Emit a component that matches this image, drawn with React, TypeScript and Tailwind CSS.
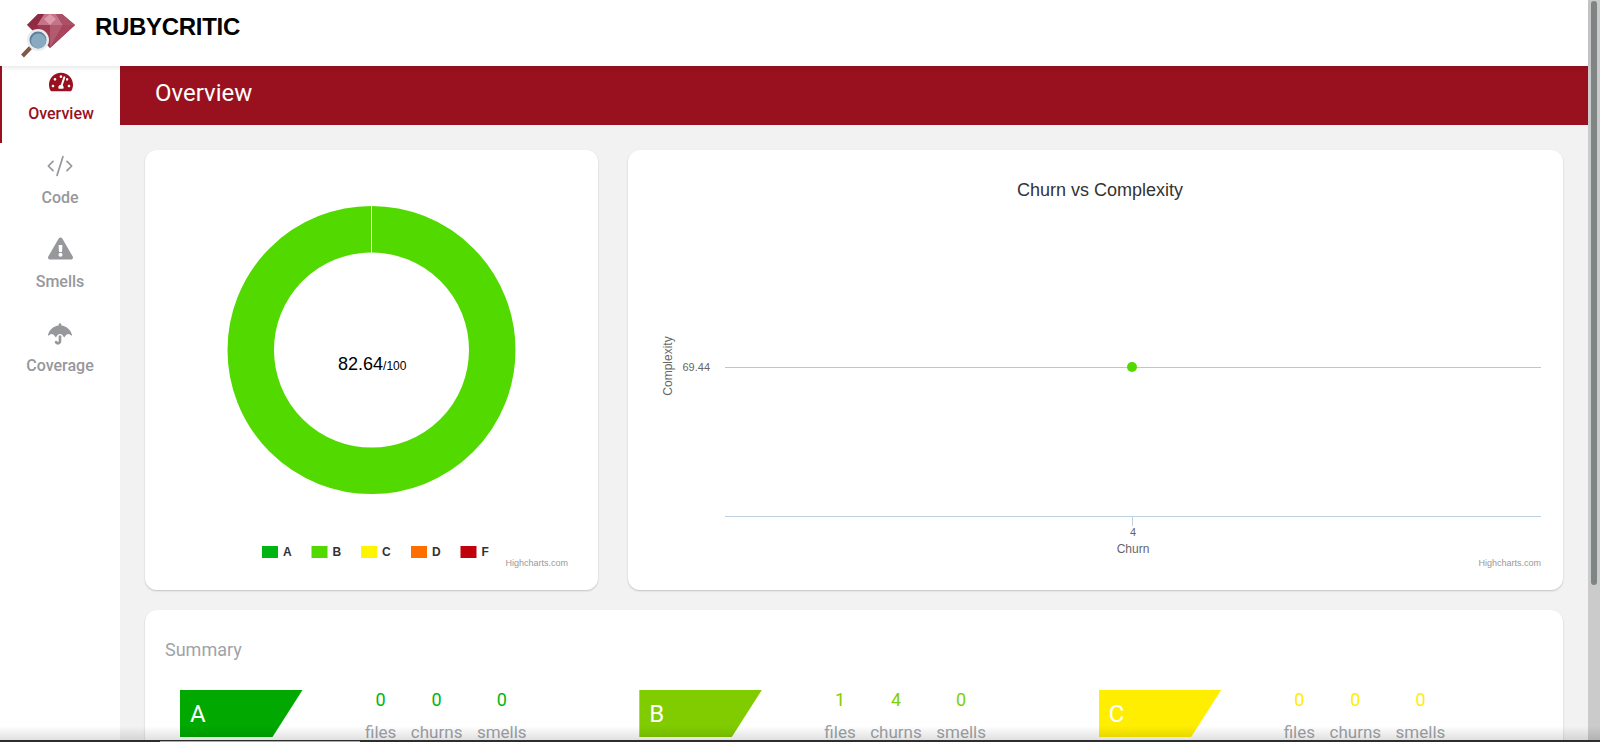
import { FaTachometerAlt, FaExclamationTriangle, FaUmbrella } from "react-icons/fa";
import { CodeXml } from "lucide-react";

const ARIAL = '"Liberation Sans", Arial, sans-serif';

function Logo() {
  return (
    <svg width="76" height="60" viewBox="0 0 76 60" className="block">
      <g transform="translate(27,0)">
        <polygon points="11,11 35,11 48,22 23,45 0,22" fill="#962c44" />
        <polygon points="17,11 29,11 36,22 10,22" fill="#c4748a" />
        <polygon points="23,11 29,16 23,22 17,16" fill="#dc9aaa" />
        <polygon points="10,22 23,22 23,45" fill="#a03a52" />
        <polygon points="23,22 36,22 23,45" fill="#b25a70" />
        <polygon points="36,22 48,22 23,45" fill="#a8455c" />
        <polygon points="35,11 48,22 36,22 29,11" fill="#ac5068" />
        <polygon points="11,11 17,11 10,22 0,22" fill="#8f2a42" />
      </g>
      <line x1="32" y1="43" x2="22.5" y2="53" stroke="#7d5a48" strokeWidth="4" />
      <circle cx="38" cy="37" r="11" fill="#e9ecee" />
      <circle cx="38" cy="37" r="8.5" fill="#5f7f9a" />
      <circle cx="38.5" cy="38" r="7.5" fill="#88aac0" />
    </svg>
  );
}

function NavItem({ label, active, icon }: { label: string; active?: boolean; icon: React.ReactNode }) {
  return (
    <div
      className={`flex h-[84px] flex-col items-center border-l-2 pt-[11px] font-medium text-[16px] ${
        active ? "border-[#99111e] text-[#99111e]" : "border-transparent pr-[2px] text-[#96989b]"
      }`}
      style={{ fontFamily: "Roboto, sans-serif" }}
    >
      <div className="flex h-[24px] items-center justify-center">{icon}</div>
      <div className="mt-[10px] leading-[20px]">{label}</div>
    </div>
  );
}

function Donut() {
  const swatches = [
    ["A", "#00b412", 262],
    ["B", "#52d900", 311.5],
    ["C", "#fff500", 361],
    ["D", "#ff6f00", 411],
    ["F", "#c0000b", 460.5],
  ] as const;
  return (
    <svg width="453" height="440" viewBox="0 -1 453 440" className="block" style={{ fontFamily: ARIAL }}>
      <circle cx="226.5" cy="199" r="120.75" fill="none" stroke="#52d900" strokeWidth="46.5" />
      <line x1="226.5" y1="54" x2="226.5" y2="102" stroke="#ffffff" strokeWidth="1" />
      <text x="193" y="219" fontSize="18" fill="#000">
        82.64<tspan fontSize="12">/100</tspan>
      </text>
      {swatches.map(([l, c, x]) => (
        <g key={l}>
          <rect x={x - 145} y={395} width="16" height="12" fill={c} />
          <text x={x - 145 + 21} y={405} fontSize="12" fontWeight="700" fill="#333333">
            {l}
          </text>
        </g>
      ))}
      <text x="423" y="415" textAnchor="end" fontSize="9" fill="#999999">
        Highcharts.com
      </text>
    </svg>
  );
}

function Scatter() {
  return (
    <svg width="935" height="440" viewBox="0 -1 935 440" className="block" style={{ fontFamily: ARIAL }}>
      <text x="472" y="45" textAnchor="middle" fontSize="18" fill="#333333">
        Churn vs Complexity
      </text>
      <line x1="97" y1="216.5" x2="913" y2="216.5" stroke="#c2c6ca" strokeWidth="1" />
      <line x1="97" y1="365.5" x2="913" y2="365.5" stroke="#bfd0e0" strokeWidth="1" />
      <line x1="504.5" y1="365" x2="504.5" y2="375" stroke="#bfd0e0" strokeWidth="1" />
      <circle cx="504" cy="216" r="5" fill="#52d900" />
      <text x="82" y="220" textAnchor="end" fontSize="11" fill="#666666">
        69.44
      </text>
      <text x="505" y="385" textAnchor="middle" fontSize="11" fill="#666666">
        4
      </text>
      <text x="505" y="402" textAnchor="middle" fontSize="12" fill="#666666">
        Churn
      </text>
      <text
        x="44"
        y="215"
        textAnchor="middle"
        fontSize="12"
        fill="#666666"
        transform="rotate(-90 44 215)"
      >
        Complexity
      </text>
      <text x="913" y="415" textAnchor="end" fontSize="9" fill="#999999">
        Highcharts.com
      </text>
    </svg>
  );
}

function Grade({
  letter,
  badge,
  num,
  values,
}: {
  letter: string;
  badge: string;
  num: string;
  values: number[];
}) {
  const labels = ["files", "churns", "smells"];
  return (
    <div className="flex items-start pl-[15px]">
      <div
        className={`flex h-[47px] w-[122.5px] items-center pl-[10px] text-[24px] text-white [clip-path:polygon(0_0,100%_0,75.5%_100%,0_100%)] ${badge}`}
      >
        {letter}
      </div>
      <div className="ml-[62.5px] flex gap-[14.5px]">
        {labels.map((l, i) => (
          <div key={l} className="flex flex-col items-center">
            <div className={`text-[18px] leading-[20px] ${num}`}>{values[i]}</div>
            <div className="mt-[10px] text-[17px] leading-[24px] text-[#a0a3a8]">{l}</div>
          </div>
        ))}
      </div>
    </div>
  );
}

export default function App() {
  return (
    <div className="relative flex h-[742px] w-[1600px] overflow-hidden bg-[#f2f2f2]" style={{ fontFamily: "Roboto, sans-serif" }}>
      <div className="flex w-[1588px] flex-col">
        <header className="relative z-10 flex h-[66px] items-center bg-white shadow-[0_1px_6px_rgba(0,0,0,0.12)]">
          <Logo />
          <div
            className="mb-[12px] ml-[19px] text-[24px] font-bold leading-[28px] tracking-[-0.3px] text-black"
            style={{ fontFamily: ARIAL }}
          >
            RUBYCRITIC
          </div>
        </header>
        <div className="flex flex-1 overflow-hidden">
          <nav className="-mt-[7px] w-[120px] shrink-0 bg-white">
            <NavItem active label="Overview" icon={<FaTachometerAlt size={24} />} />
            <NavItem label="Code" icon={<CodeXml size={28} strokeWidth={1.5} />} />
            <NavItem label="Smells" icon={<FaExclamationTriangle size={25} className="-mt-[4px]" />} />
            <NavItem label="Coverage" icon={<FaUmbrella size={24} />} />
          </nav>
          <main className="flex-1">
            <div className="flex h-[59px] items-center bg-[#99111e] pb-[6px] pl-[35px] text-[24px] text-white">Overview</div>
            <div className="px-[25px] pt-[25px]">
              <div className="flex gap-[30px]">
                <div className="h-[440px] w-[453px] rounded-[12px] bg-white shadow-[0_1px_2px_rgba(0,0,0,0.2)]">
                  <Donut />
                </div>
                <div className="h-[440px] w-[935px] rounded-[12px] bg-white shadow-[0_1px_2px_rgba(0,0,0,0.2)]">
                  <Scatter />
                </div>
              </div>
              <div className="mt-[20px] h-[300px] rounded-[12px] bg-white px-[20px] pt-[27px] shadow-[0_1px_2px_rgba(0,0,0,0.2)]">
                <div className="text-[18px] leading-[26px] text-[#a0a3a8]">Summary</div>
                <div className="mt-[27px] grid grid-cols-3">
                  <Grade letter="A" badge="bg-[#00a800]" num="text-[#00b412]" values={[0, 0, 0]} />
                  <Grade letter="B" badge="bg-[#80cc00]" num="text-[#7fd000]" values={[1, 4, 0]} />
                  <Grade letter="C" badge="bg-[#ffee00]" num="text-[#ffee00]" values={[0, 0, 0]} />
                </div>
              </div>
            </div>
          </main>
        </div>
      </div>
      <div className="flex w-[12px] justify-center bg-[#cbcbcb]">
        <div className="mt-[1px] h-[584px] w-[6px] rounded-[3px] bg-[#7f8484]" />
      </div>
      <div className="pointer-events-none absolute inset-x-0 bottom-[2px] h-[14px] bg-gradient-to-b from-transparent to-[rgba(0,0,0,0.12)]" />
      <div className="absolute inset-x-0 bottom-0 h-[2px] bg-[#2d2d2d]" />
      <div className="absolute bottom-0 left-[160px] h-px w-[200px] bg-[#a9b08f]" />
    </div>
  );
}
